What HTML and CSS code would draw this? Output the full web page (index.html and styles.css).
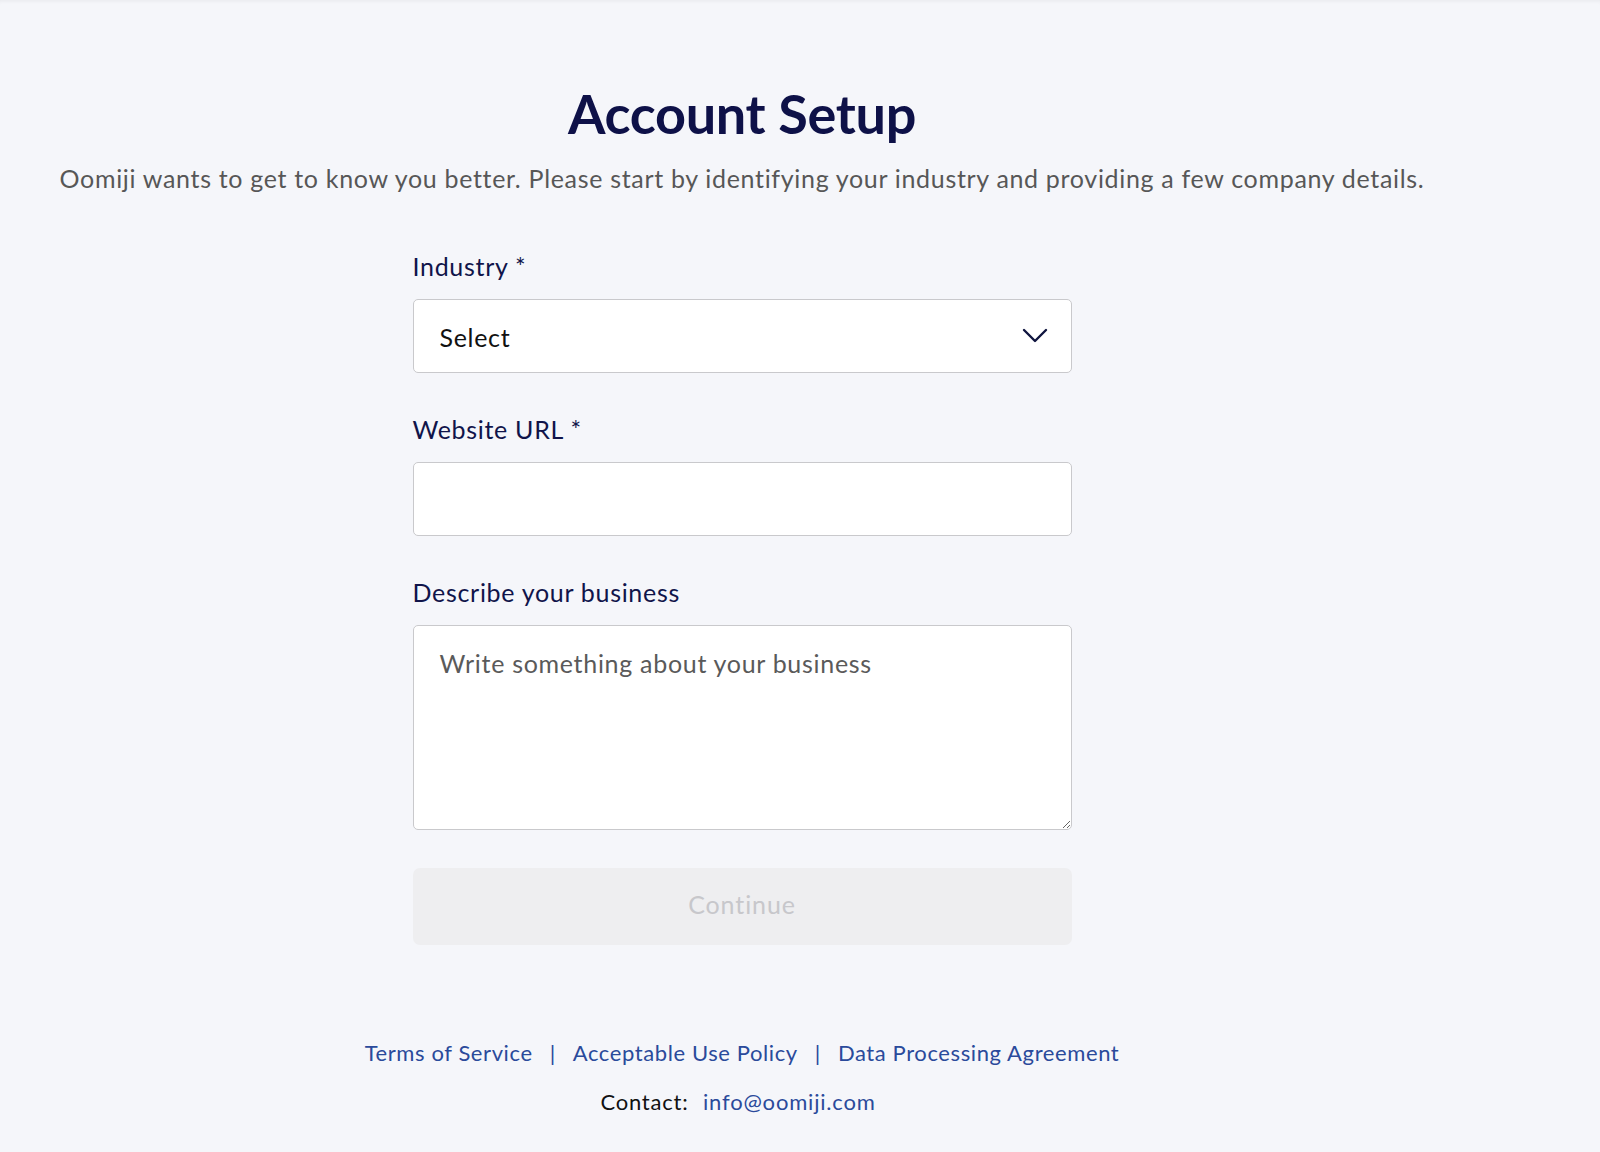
FILE: index.html
```html
<!DOCTYPE html>
<html lang="en">
<head>
<meta charset="utf-8">
<title>Account Setup</title>
<link rel="stylesheet" href="styles.css">
</head>
<body>
<div class="page">
  <main class="setup">
    <h1 class="title">Account Setup</h1>
    <p class="intro">Oomiji wants to get to know you better. Please start by identifying your industry and providing a few company details.</p>
    <form class="form">
      <div class="field">
        <label class="label">Industry *</label>
        <div class="select">
          <span class="select-text">Select</span>
          <svg class="chevron" width="26" height="16" viewBox="0 0 26 16"><path d="M2 2 L13 13 L24 2" fill="none" stroke="#10153f" stroke-width="2.4" stroke-linecap="round" stroke-linejoin="round"/></svg>
        </div>
      </div>
      <div class="field">
        <label class="label">Website URL *</label>
        <input class="input" type="text">
      </div>
      <div class="field">
        <label class="label">Describe your business</label>
        <textarea class="textarea" placeholder="Write something about your business"></textarea>
      </div>
      <button class="button" type="button" disabled>Continue</button>
    </form>
  </main>
  <footer class="footer">
    <div class="links">
      <a class="link">Terms of Service</a><span class="sep">|</span><a class="link">Acceptable Use Policy</a><span class="sep">|</span><a class="link">Data Processing Agreement</a>
    </div>
    <div class="contact">Contact: <a class="link">info@oomiji.com</a></div>
  </footer>
</div>
</body>
</html>
```
FILE: styles.css
```css
html, body {
  margin: 0;
  padding: 0;
}
body {
  background: #f5f6fa;
  font-family: Lato, "Open Sans", sans-serif;
  min-height: 1152px;
  box-shadow: inset 0 4px 4px -3px rgba(0,0,0,0.06);
}
.page {
  width: 1484px;
  padding-top: 79px;
  display: flex;
  flex-direction: column;
  align-items: center;
}
.setup {
  display: flex;
  flex-direction: column;
  align-items: center;
  width: 100%;
}
.title {
  margin: 0;
  font-size: 54px;
  line-height: 70px;
  font-weight: 700;
  letter-spacing: -0.3px;
  color: #0e1148;
}
.intro {
  margin: 13px 0 0;
  font-size: 25px;
  line-height: 32px;
  letter-spacing: 0.68px;
  color: #575757;
  text-align: center;
}
.form {
  width: 659px;
  margin-top: 56px;
  display: flex;
  flex-direction: column;
}
.field {
  display: flex;
  flex-direction: column;
  gap: 17px;
  margin-bottom: 40px;
}
.label {
  font-size: 25px;
  line-height: 32px;
  letter-spacing: 0.7px;
  color: #10144a;
}
.select, .input, .textarea {
  box-sizing: border-box;
  width: 659px;
  background: #fff;
  border: 1.5px solid #c9c9cc;
  border-radius: 5px;
  font-family: inherit;
  font-size: 25px;
  letter-spacing: 0.7px;
}
.select {
  height: 74px;
  display: flex;
  align-items: center;
  justify-content: space-between;
  padding: 0 23px 0 26px;
  color: #111;
}
.select-text {
  padding-top: 2px;
}
.input {
  height: 74px;
  padding: 0 26px;
  outline: none;
}
.textarea {
  height: 205px;
  padding: 21px 26px;
  resize: vertical;
  line-height: 32px;
  color: #555;
}
.textarea::placeholder {
  color: #5a5a5a;
  opacity: 1;
}
.button {
  margin-top: -2px;
  height: 77px;
  padding: 0 0 5px;
  border: none;
  border-radius: 7px;
  background: #eeeef0;
  color: #c7c7cb;
  font-family: inherit;
  font-size: 25px;
  letter-spacing: 0.9px;
}
.footer {
  margin-top: 92px;
  display: flex;
  flex-direction: column;
  align-items: center;
  gap: 17px;
  font-size: 22px;
  line-height: 32px;
  letter-spacing: 0.6px;
}
.link {
  color: #2a4a9b;
  text-decoration: none;
}
.sep {
  color: #2a4a9b;
  margin: 0 17px;
}
.contact {
  color: #111;
  letter-spacing: 0.8px;
  padding-right: 8px;
}
.contact .link {
  margin-left: 8px;
}
```
